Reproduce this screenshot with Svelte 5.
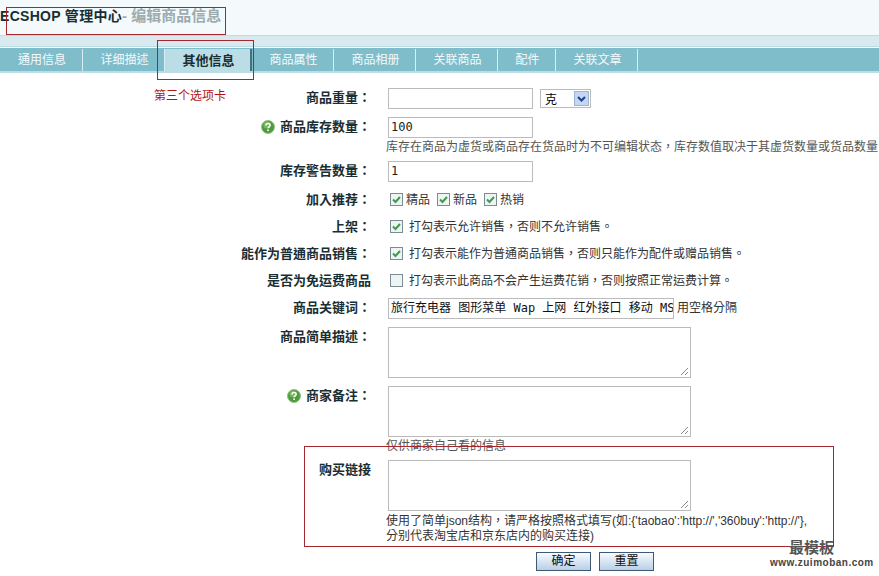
<script>
  const tabs = ['通用信息', '详细描述', '其他信息', '商品属性', '商品相册', '关联商品', '配件', '关联文章'];
  const active = 2;
</script>

{#snippet help()}
  <svg class="help" viewBox="0 0 14 14" width="14" height="14">
    <circle cx="7" cy="7" r="6.5" fill="#4f9a3c" stroke="#8fc486" />
    <circle cx="6" cy="5" r="3.5" fill="#8ccf6f" opacity="0.6" />
    <path d="M5 5.4c0-2.6 4.2-2.6 4.2-.1 0 1.500-2.100 1.500-2.100 3" fill="none" stroke="#fff" stroke-width="1.500" />
    <rect x="6.300" y="9.400" width="1.600" height="1.600" fill="#fff" />
  </svg>
{/snippet}

{#snippet check(on)}
  <span class="check">
    {#if on}
      <svg viewBox="0 0 11 11" width="11" height="11">
        <path d="M2 5.500l2.500 2.500L9 3" fill="none" stroke="#3f9a4a" stroke-width="2" />
      </svg>
    {/if}
  </span>
{/snippet}

{#snippet textarea()}
  <span class="area">
    <svg class="grip" viewBox="0 0 9 9" width="9" height="9">
      <path d="M1 8l7-7M5 8l3-3" fill="none" stroke="#888" stroke-width="1" />
    </svg>
  </span>
{/snippet}

<div class="page">
  <header class="title">
    <span class="brand">ECSHOP 管理中心</span><span class="sub">- 编辑商品信息</span>
  </header>
  <div class="strip"></div>

  <nav class="tabs">
    {#each tabs as tab, i}
      <div class="tab" class:active={i === active} class:short={tab.length === 2}>{tab}</div>
    {/each}
  </nav>

  <main class="form">
    <div class="label r-weight">商品重量：</div>
    <div class="field r-weight">
      <span class="input w145"></span>
      <span class="select">
        <span class="select-text">克</span>
        <span class="select-arrow">
          <svg viewBox="0 0 9 6" width="9" height="6"><path d="M1 1l3.500 3.500L8 1" fill="none" stroke="#1d3f8f" stroke-width="2" /></svg>
        </span>
      </span>
    </div>

    <div class="label r-stock">{@render help()}商品库存数量：</div>
    <div class="field r-stock col">
      <span class="input w145">100</span>
      <p class="note stock-note">库存在商品为虚货或商品存在货品时为不可编辑状态，库存数值取决于其虚货数量或货品数量</p>
    </div>

    <div class="label r-warn">库存警告数量：</div>
    <div class="field r-warn"><span class="input w145">1</span></div>

    <div class="label r-line">加入推荐：</div>
    <div class="field r-line rec">
      <span class="opt">{@render check(true)}精品</span>
      <span class="opt">{@render check(true)}新品</span>
      <span class="opt">{@render check(true)}热销</span>
    </div>

    <div class="label r-line">上架：</div>
    <div class="field r-line boxed">{@render check(true)}<span class="desc">打勾表示允许销售，否则不允许销售。</span></div>

    <div class="label r-line">能作为普通商品销售：</div>
    <div class="field r-line boxed">{@render check(true)}<span class="desc">打勾表示能作为普通商品销售，否则只能作为配件或赠品销售。</span></div>

    <div class="label r-line">是否为免运费商品</div>
    <div class="field r-line boxed">{@render check(false)}<span class="desc">打勾表示此商品不会产生运费花销，否则按照正常运费计算。</span></div>

    <div class="label r-key">商品关键词：</div>
    <div class="field r-key">
      <span class="input keywords">旅行充电器 图形菜单 Wap 上网 红外接口 移动 MS</span>
      <span class="key-note">用空格分隔</span>
    </div>

    <div class="label r-area">商品简单描述：</div>
    <div class="field r-area">{@render textarea()}</div>

    <div class="label r-area">{@render help()}商家备注：</div>
    <div class="field r-area col">
      {@render textarea()}
      <p class="note seller-note">仅供商家自己看的信息</p>
    </div>

    <div class="label r-buy">购买链接</div>
    <div class="field r-buy col">
      {@render textarea()}
      <p class="note buy-note">使用了简单json结构，请严格按照格式填写(如:&#123;'taobao':'http://','360buy':'http://'&#125;,<br />分别代表淘宝店和京东店内的购买连接)</p>
    </div>
  </main>

  <div class="actions">
    <span class="btn">确定</span>
    <span class="btn">重置</span>
  </div>

  <div class="mark mark-title"></div>
  <div class="mark mark-tab"></div>
  <div class="mark mark-buy"></div>
  <div class="mark-text">第三个选项卡</div>
  <div class="logo">
    <div class="logo-cn">最模板</div>
    <div class="logo-en">www.zuimoban.com</div>
  </div>
</div>

<style>
  :global(body) {
    margin: 0;
    background: #fff;
  }

  .page {
    position: relative;
    width: 879px;
    height: 576px;
    overflow: hidden;
    font-family: "Liberation Sans", "Noto Sans CJK TC", sans-serif;
    font-size: 12px;
    color: #192e32;
  }

  .title {
    height: 36px;
    box-sizing: border-box;
    padding: 6px 0 0 0;
    line-height: 20px;
    font-weight: bold;
    background: #f4f9fc;
    border-bottom: 1px solid #bbdde5;
    white-space: nowrap;
  }

  .brand {
    font-size: 14px;
    letter-spacing: 0.3px;
    color: #192e32;
  }

  .sub {
    font-size: 15px;
    color: #9cacaf;
  }

  .strip {
    height: 10px;
    background: #d8e9f0;
    border-bottom: 1px solid #bbdde5;
    margin-bottom: 1px;
  }

  .tabs {
    display: flex;
    height: 23px;
    background: #80bdcb;
    border-bottom: 2px solid #bbdde5;
  }

  .tab {
    box-sizing: border-box;
    width: 82px;
    height: 22px;
    margin-top: 1px;
    padding-left: 2px;
    border-right: 1px solid #d8eef3;
    color: #f4fafb;
    text-align: center;
    line-height: 23px;
  }

  .tab:first-child {
    width: 83px;
  }

  .tab.short {
    width: 58px;
  }

  .tab.active {
    width: 87px;
    background: #bbdde5;
    color: #192e32;
    font-size: 13px;
    font-weight: bold;
    border-right: 2px solid #4a7080;
  }

  .form {
    display: grid;
    grid-template-columns: 371px 1fr;
    column-gap: 17px;
    padding-top: 15px;
  }

  .label {
    text-align: right;
    font-size: 13px;
    font-weight: bold;
    line-height: 20px;
    white-space: nowrap;
  }

  .field {
    display: flex;
    align-items: flex-start;
    white-space: nowrap;
  }

  .col {
    flex-direction: column;
  }

  .r-weight { height: 29px; }
  .r-stock { height: 44px; }
  .r-warn { height: 29px; }
  .r-line { height: 27px; line-height: 20px; }
  .r-key { height: 29px; }
  .r-area { height: 59px; }
  .r-buy { height: 92px; margin-top: 15px; }

  .input {
    display: block;
    flex: none;
    box-sizing: border-box;
    height: 21px;
    border: 1px solid #bbb;
    font-family: "DejaVu Sans Mono", "Noto Sans CJK TC", monospace;
    font-size: 12px;
    line-height: 19px;
    padding-left: 2px;
    color: #222;
    background: #fff;
  }

  .w145 {
    width: 145px;
  }

  .keywords {
    width: 286px;
    overflow: hidden;
    color: #111;
  }

  .key-note {
    margin-left: 3px;
    line-height: 21px;
    color: #333;
  }

  .select {
    display: flex;
    align-items: center;
    justify-content: space-between;
    box-sizing: border-box;
    width: 51px;
    height: 19px;
    margin: 1px 0 0 7px;
    border: 1px solid #bbb;
    padding: 0 1px 0 4px;
    color: #000;
  }

  .select-arrow {
    display: flex;
    align-items: center;
    justify-content: center;
    width: 15px;
    height: 15px;
    background: #c4d6f2;
    border: 1px solid #9cb3d6;
    box-sizing: border-box;
  }

  .note {
    flex: none;
    margin: 0;
    color: #555;
    line-height: 15px;
  }

  .stock-note {
    margin-top: 2px;
    margin-left: -2px;
  }

  .seller-note {
    margin-top: 2px;
    margin-left: -2px;
  }

  .buy-note {
    margin-top: 3px;
    margin-left: -2px;
    color: #333;
  }

  .check {
    display: inline-flex;
    align-items: center;
    justify-content: center;
    box-sizing: border-box;
    width: 13px;
    height: 13px;
    margin-top: 3px;
    border: 1px solid #7c8c93;
    background: #eef3f3;
    flex: none;
  }

  .rec,
  .boxed {
    padding-left: 2px;
  }

  .opt {
    display: inline-flex;
    align-items: flex-start;
    gap: 3px;
    margin-right: 7px;
    color: #333;
  }

  .desc {
    margin-left: 6px;
    color: #333;
  }

  .area {
    position: relative;
    display: block;
    flex: none;
    box-sizing: border-box;
    width: 303px;
    height: 51px;
    border: 1px solid #bbb;
  }

  .grip {
    position: absolute;
    right: 1px;
    bottom: 1px;
  }

  .actions {
    position: absolute;
    left: 536px;
    top: 552px;
    display: flex;
    gap: 8px;
  }

  .btn {
    box-sizing: border-box;
    width: 55px;
    height: 19px;
    border: 1px solid #3f5a70;
    background: linear-gradient(#f7fbff, #b9cfe6);
    color: #111;
    text-align: center;
    line-height: 17px;
  }

  .mark {
    position: absolute;
    box-sizing: border-box;
    border: 1px solid #a3272c;
  }

  .mark-title {
    left: 6px;
    top: 7px;
    width: 220px;
    height: 28px;
  }

  .mark-tab {
    left: 157px;
    top: 40px;
    width: 97px;
    height: 40px;
  }

  .mark-buy {
    left: 304px;
    top: 446px;
    width: 530px;
    height: 101px;
  }

  .mark-text {
    position: absolute;
    left: 154px;
    top: 88px;
    color: #b01419;
    line-height: 16px;
  }

  .logo {
    position: absolute;
    left: 770px;
    top: 539px;
    color: #555;
  }

  .logo-cn {
    padding-left: 19px;
    font-weight: bold;
    font-size: 15px;
    line-height: 17px;
  }

  .logo-en {
    font-size: 10px;
    font-weight: bold;
    line-height: 13px;
    letter-spacing: 0.5px;
    color: #444;
    white-space: nowrap;
  }

  .help {
    vertical-align: -3px;
    margin-right: 5px;
  }
</style>
